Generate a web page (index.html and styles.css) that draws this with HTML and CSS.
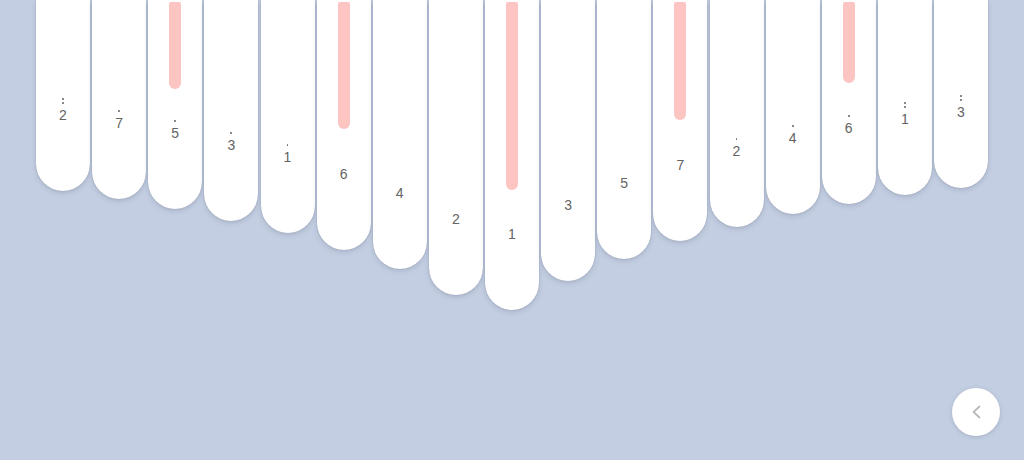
FILE: index.html
```html
<!DOCTYPE html>
<html lang="en">
<head>
<meta charset="UTF-8">
<meta name="viewport" content="width=device-width, initial-scale=1.0">
<title>Kalimba</title>
<link rel="stylesheet" href="styles.css">
</head>
<body>
<div id="stage">
    <ul id="tines">
        <li class="tine" style="height:191px"><span class="note"><i class="dots"><b></b><b></b></i>2</span></li>
        <li class="tine" style="height:199px"><span class="note"><i class="dots"><b></b></i>7</span></li>
        <li class="tine" style="height:209px"><em class="bar" style="height:87px"></em><span class="note"><i class="dots"><b></b></i>5</span></li>
        <li class="tine" style="height:221px"><span class="note"><i class="dots"><b></b></i>3</span></li>
        <li class="tine" style="height:233px"><span class="note"><i class="dots"><b></b></i>1</span></li>
        <li class="tine" style="height:250px"><em class="bar" style="height:127px"></em><span class="note">6</span></li>
        <li class="tine" style="height:269px"><span class="note">4</span></li>
        <li class="tine" style="height:295px"><span class="note">2</span></li>
        <li class="tine" style="height:310px"><em class="bar" style="height:188px"></em><span class="note">1</span></li>
        <li class="tine" style="height:281px"><span class="note">3</span></li>
        <li class="tine" style="height:259px"><span class="note">5</span></li>
        <li class="tine" style="height:241px"><em class="bar" style="height:118px"></em><span class="note">7</span></li>
        <li class="tine" style="height:227px"><span class="note"><i class="dots"><b></b></i>2</span></li>
        <li class="tine" style="height:214px"><span class="note"><i class="dots"><b></b></i>4</span></li>
        <li class="tine" style="height:204px"><em class="bar" style="height:81px"></em><span class="note"><i class="dots"><b></b></i>6</span></li>
        <li class="tine" style="height:195px"><span class="note"><i class="dots"><b></b><b></b></i>1</span></li>
        <li class="tine" style="height:188px"><span class="note"><i class="dots"><b></b><b></b></i>3</span></li>
    </ul>
    <a href="javascript:;" class="back">
        <svg width="11" height="14" viewBox="0 0 11 14"><path d="M8.5 1.5L2.5 7L8.5 12.5" fill="none" stroke="#b8b8b8" stroke-width="1.7" stroke-linecap="round" stroke-linejoin="round"/></svg>
    </a>
</div>
</body>
</html>
```
FILE: styles.css
```css
html, body {margin: 0;padding: 0;}
body {background: #c3cee2;font-family: "Liberation Sans", Arial, sans-serif;overflow: hidden;}
ul {margin: 0;padding: 0;list-style: none;}
#stage {position: relative;height: 460px;}
#tines {display: flex;justify-content: center;align-items: flex-start;gap: 2.125px;}
.tine {width: 54px;display: flex;flex-direction: column;align-items: center;background: #fff;border-radius: 0 0 27px 27px;box-shadow: 0 0 1px rgba(80, 90, 110, .55), 0 2px 5px rgba(80, 90, 115, .22);}
.bar {display: block;width: 12px;margin-top: 2px;background: #fdc5c2;border-radius: 2px 2px 6px 6px;}
.note {margin-top: auto;padding-bottom: 69px;display: flex;flex-direction: column;align-items: center;font-size: 14px;line-height: 14px;color: #636363;}
.dots {display: flex;flex-direction: column;align-items: center;gap: 2.6px;margin-bottom: 4px;}
.dots b {display: block;width: 1.8px;height: 1.8px;border-radius: 50%;background: #666;}
.back {position: absolute;right: 24px;bottom: 24px;width: 48px;height: 48px;border-radius: 50%;background: #fff;display: flex;align-items: center;justify-content: center;box-shadow: 0 1px 4px rgba(80, 90, 115, .25);}
.back svg {display: block;}
```
